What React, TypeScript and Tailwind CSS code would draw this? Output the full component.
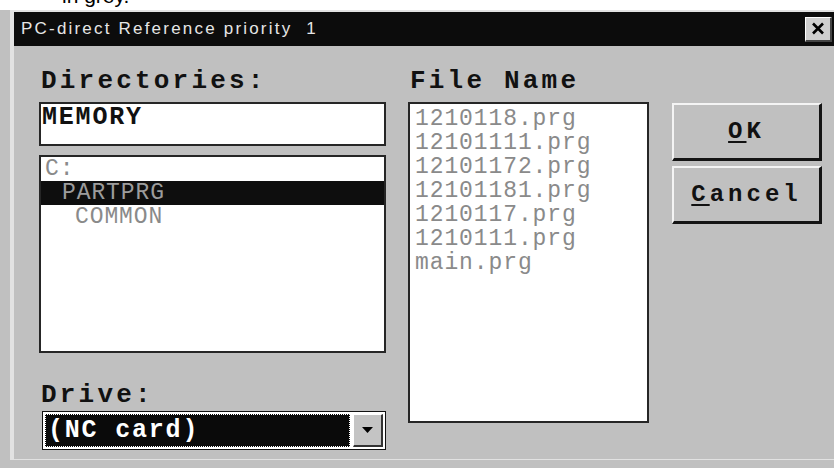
import React from 'react';

const mono = "font-['Liberation_Mono','DejaVu_Sans_Mono',monospace]";

const dirs = [
  { name: 'C:', indent: 'pl-[4px]', selected: false },
  { name: 'PARTPRG', indent: 'pl-[21px]', selected: true },
  { name: 'COMMON', indent: 'pl-[34px]', selected: false },
];

const files = [
  '1210118.prg',
  '12101111.prg',
  '12101172.prg',
  '12101181.prg',
  '1210117.prg',
  '1210111.prg',
  'main.prg',
];

// Win95 style push button with a single underlined access key
function PushButton({ hotkey, rest }: { hotkey: string; rest: string }) {
  return (
    <button
      type="button"
      className={`h-[58px] w-full bg-[#c0c0c0] border-t-2 border-l-2 border-t-[#f4f4f4] border-l-[#f4f4f4] border-b-[3px] border-r-[3px] border-b-[#141414] border-r-[#141414] flex items-center justify-center text-[24px] leading-[26px] font-bold tracking-[4px] text-[#111] ${mono}`}
    >
      <span className="underline underline-offset-[3px] decoration-2">{hotkey}</span>
      <span>{rest}</span>
    </button>
  );
}

function Heading({ children }: { children: React.ReactNode }) {
  return (
    <div className={`h-[26px] pl-[2px] text-[26px] leading-[26px] font-bold tracking-[3.2px] text-[#111] whitespace-nowrap ${mono}`}>
      {children}
    </div>
  );
}

export default function App() {
  return (
    <div className="w-[834px] h-[468px] overflow-hidden bg-[#c0c0c0] font-['Liberation_Sans',Arial,sans-serif]">
      {/* strip of page text above the dialog */}
      <div className="h-[10px] bg-white overflow-hidden">
        <p className="pl-[62px] -mt-[15px] text-[21px] leading-[21px] text-black">in grey.</p>
      </div>

      <div className="ml-[10px] h-[450px] border-l-[4px] border-t-2 border-b border-[#e2e2e2] bg-[#c0c0c0]">
        {/* title bar */}
        <div className="h-[34px] bg-[#0c0c0c] flex items-center justify-between pl-[7px] pr-[2px]">
          <span className="text-[17px] tracking-[2.2px] text-[#e6e6e6] whitespace-pre">PC-direct Reference priority  1</span>
          <button
            type="button"
            className="w-[27px] h-[25px] bg-[#cfcfcf] border-t border-l border-t-white border-l-white border-b-2 border-r-2 border-b-[#444] border-r-[#444] flex items-center justify-center"
          >
            <svg width="14" height="13" viewBox="0 0 14 13">
              <path d="M2 1.5 L12 11.5 M12 1.5 L2 11.5" stroke="#000" strokeWidth="2.6" />
            </svg>
          </button>
        </div>

        <div className="flex pl-[25px] pt-[22px]">
          {/* directories column */}
          <div className="w-[347px] flex flex-col">
            <Heading>Directories:</Heading>
            <div className="mt-[8px] h-[44px] bg-white border-2 border-[#262626] pl-[1px] pt-[1px]">
              <span className={`text-[25px] leading-[25px] font-bold tracking-[1.8px] text-[#111] ${mono}`}>MEMORY</span>
            </div>
            <div className="mt-[9px] h-[198px] bg-white border-2 border-[#262626]">
              {dirs.map((d) => (
                <div
                  key={d.name}
                  className={`h-[24px] text-[23px] leading-[24px] tracking-[0.9px] ${mono} ${d.indent} ${
                    d.selected ? 'bg-[#0e0e0e] text-[#9c9c9c]' : 'text-[#8a8a8a]'
                  }`}
                >
                  {d.name}
                </div>
              ))}
            </div>

            <div className="mt-[29px]">
              <Heading>Drive:</Heading>
            </div>
            <div className="mt-[3px] ml-[3px] h-[39px] bg-white border-[1.5px] border-[#111] p-[2px] flex gap-[3px]">
              <div className="flex-1 bg-[#0a0a0a] border border-dotted border-white flex items-center pl-[2px]">
                <span className={`text-[25px] leading-[25px] font-bold tracking-[1.8px] text-white ${mono}`}>(NC card)</span>
              </div>
              <div className="w-[30px] bg-[#c4c4c4] border-t border-l border-t-white border-l-white border-b-2 border-r-2 border-b-[#333] border-r-[#333] flex items-center justify-center">
                <svg width="11" height="6" viewBox="0 0 11 6">
                  <path d="M0 0 H11 L5.5 6 Z" fill="#000" />
                </svg>
              </div>
            </div>
          </div>

          {/* file name column */}
          <div className="ml-[22px] w-[241px] flex flex-col">
            <Heading>File Name</Heading>
            <div className="mt-[8px] h-[321px] bg-white border-2 border-[#262626] pl-[5px] pt-[3px]">
              {files.map((f) => (
                <div key={f} className={`h-[24px] text-[23px] leading-[24px] tracking-[0.9px] text-[#8a8a8a] ${mono}`}>
                  {f}
                </div>
              ))}
            </div>
          </div>

          {/* buttons */}
          <div className="ml-[23px] w-[150px] mt-[35px] flex flex-col gap-[5px]">
            <PushButton hotkey="O" rest="K" />
            <PushButton hotkey="C" rest="ancel" />
          </div>
        </div>
      </div>
    </div>
  );
}
